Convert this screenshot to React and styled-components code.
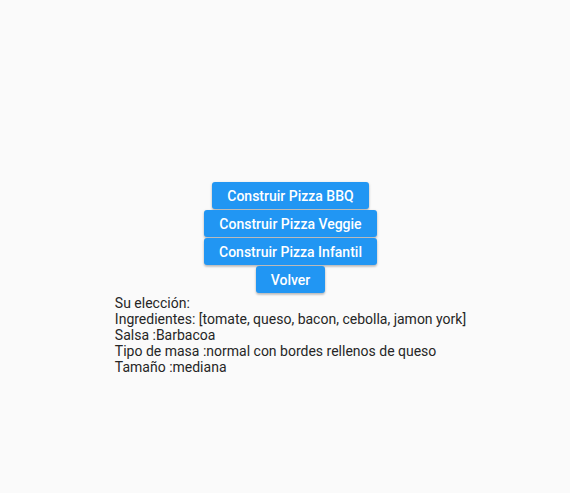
import React from "react";
import styled, { createGlobalStyle } from "styled-components";

const GlobalStyle = createGlobalStyle`
  body {
    margin: 0;
    background: #fafafa;
    font-family: Roboto, "Noto Sans", sans-serif;
  }
`;

const Page = styled.div`
  min-height: 493px;
  display: flex;
  flex-direction: column;
  align-items: center;
  padding-top: 182px;
  padding-left: 11px;
  box-sizing: border-box;
`;

const Button = styled.button`
  height: 27px;
  margin-bottom: 1px;
  padding: 0 15px;
  border: none;
  border-radius: 3px;
  background: #2196f3;
  color: #ffffff;
  font-family: Roboto, sans-serif;
  font-size: 14px;
  font-weight: 500;
  box-shadow: 0 1px 3px rgba(0, 0, 0, 0.2), 0 2px 2px rgba(0, 0, 0, 0.12);
  cursor: pointer;
`;

const Summary = styled.div`
  display: flex;
  flex-direction: column;
  align-items: flex-start;
  margin-top: 1px;
  font-size: 14px;
  line-height: 16px;
  color: #262626;
`;

const Line = styled.div`
  white-space: nowrap;
`;

export default function App() {
  const buttons = [
    "Construir Pizza BBQ",
    "Construir Pizza Veggie",
    "Construir Pizza Infantil",
    "Volver",
  ];
  const lines = [
    "Su elección:",
    "Ingredientes: [tomate, queso, bacon, cebolla, jamon york]",
    "Salsa :Barbacoa",
    "Tipo de masa :normal con bordes rellenos de queso",
    "Tamaño :mediana",
  ];
  return (
    <>
      <GlobalStyle />
      <Page>
        {buttons.map((b) => (
          <Button key={b}>{b}</Button>
        ))}
        <Summary>
          {lines.map((l) => (
            <Line key={l}>{l}</Line>
          ))}
        </Summary>
      </Page>
    </>
  );
}
